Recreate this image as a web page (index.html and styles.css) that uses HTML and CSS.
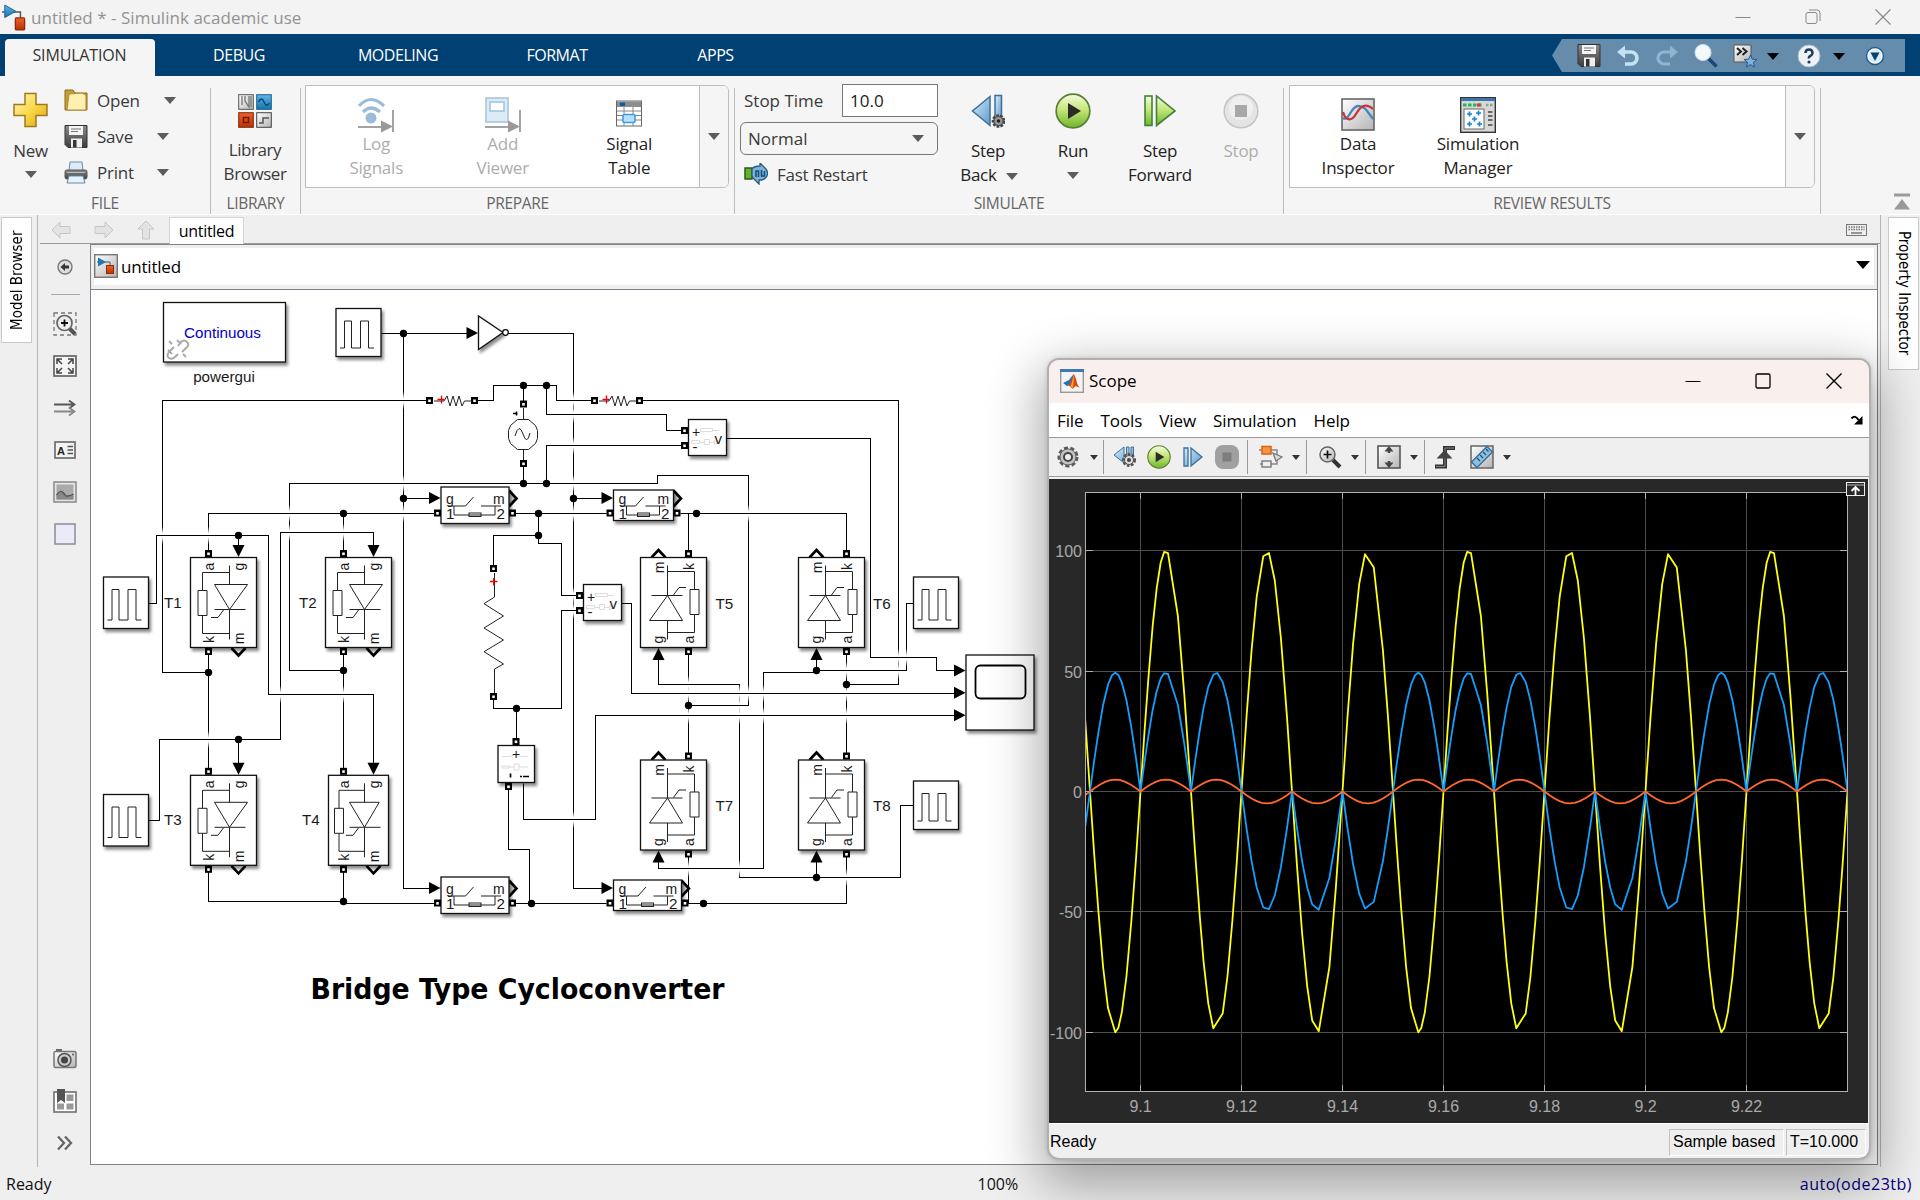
FILE: index.html
```html
<!DOCTYPE html>
<html lang="en">
<head>
<meta charset="utf-8">
<title>untitled * - Simulink academic use</title>
<link rel="stylesheet" href="styles.css">
</head>
<body>
<svg class="defs" aria-hidden="true">
  <defs>
    <linearGradient id="gold" x1="0" y1="0" x2="1" y2="1"><stop offset="0" stop-color="#fff6c0"/><stop offset=".5" stop-color="#fbd94b"/><stop offset="1" stop-color="#d9a514"/></linearGradient>
    <linearGradient id="blue" x1="0" y1="0" x2="1" y2="1"><stop offset="0" stop-color="#d8ecfa"/><stop offset="1" stop-color="#5a9bcc"/></linearGradient>
    <linearGradient id="deepblue" x1="0" y1="0" x2="0" y2="1"><stop offset="0" stop-color="#5fb8ea"/><stop offset="1" stop-color="#1672b0"/></linearGradient>
    <linearGradient id="red" x1="0" y1="0" x2="0" y2="1"><stop offset="0" stop-color="#f0602c"/><stop offset="1" stop-color="#b83206"/></linearGradient>
    <linearGradient id="green" x1="0" y1="0" x2="0" y2="1"><stop offset="0" stop-color="#f4fbe0"/><stop offset=".45" stop-color="#c5e87a"/><stop offset="1" stop-color="#6db52c"/></linearGradient>
    <linearGradient id="steel" x1="0" y1="0" x2="1" y2="1"><stop offset="0" stop-color="#ffffff"/><stop offset="1" stop-color="#b4b4b4"/></linearGradient>
    <linearGradient id="dark" x1="0" y1="0" x2="0" y2="1"><stop offset="0" stop-color="#8c8c8c"/><stop offset="1" stop-color="#3c3c3c"/></linearGradient>
    <symbol id="i-simulink" viewBox="0 0 26 30"><path d="M0 9h17M16 9h4v7" fill="none" stroke="#555" stroke-width="1.6"/><path d="M3 1.5v13.500l12-6.700z" fill="url(#deepblue)" stroke="#1c5a8a"/><rect x="14.500" y="15.500" width="10" height="13" rx="1" fill="url(#red)" stroke="#8c2c08" stroke-width="1.400"/></symbol>
    <symbol id="i-save" viewBox="0 0 24 24"><path d="M1 1h22v22H4l-3-3z" fill="url(#dark)" stroke="#333"/><rect x="5" y="1.500" width="14" height="9" fill="#f4f4f4"/><path d="M7 4.500h10M7 7h7" stroke="#777"/><rect x="7" y="14" width="11" height="9" fill="#eee"/><rect x="9" y="15.500" width="3.500" height="7.500" fill="#333"/></symbol>
    <symbol id="i-stepback" viewBox="0 0 34 36"><path d="M19 3.500v29L1.500 18z" fill="url(#blue)" stroke="#3f6f96" stroke-width="1.500"/><rect x="24" y="2.500" width="6.500" height="26" fill="url(#blue)" stroke="#3f6f96" stroke-width="1.500"/><circle cx="27.500" cy="28" r="5.600" fill="#aaa" stroke="#444" stroke-width="2.500" stroke-dasharray="2.700 1.200"/><circle cx="27.500" cy="28" r="4.500" fill="#999" stroke="#444"/><circle cx="27.500" cy="28" r="1.800" fill="#222"/></symbol>
    <symbol id="i-run" viewBox="0 0 36 36"><circle cx="18" cy="18" r="16.800" fill="url(#green)" stroke="#5b7f36" stroke-width="1.700"/><path d="M13 10l13 8-13 8z" fill="#2b2b2b"/></symbol>
    <symbol id="i-gear" viewBox="0 0 24 24"><circle cx="12" cy="12" r="8.500" fill="#bbb" stroke="#5a5a5a" stroke-width="4" stroke-dasharray="3.800 2.200"/><circle cx="12" cy="12" r="8" fill="#c4c4c4" stroke="#666"/><circle cx="12" cy="12" r="4" fill="#eee" stroke="#444" stroke-width="2"/></symbol>
    <symbol id="i-zoom" viewBox="0 0 24 24"><path d="M15 15l7 7" stroke="#333" stroke-width="4"/><circle cx="9.500" cy="9.500" r="7.500" fill="url(#steel)" stroke="#666" stroke-width="1.500"/><path d="M5.500 9.500h8M9.500 5.500v8" stroke="#111" stroke-width="1.700"/></symbol>
  </defs>
</svg>

<div class="app">
  <header class="titlebar">
    <svg class="app-icon" width="24" height="29"><use href="#i-simulink"/></svg>
    <span class="title-text">untitled * - Simulink academic use</span>
    <div class="win-controls">
      <svg width="16" height="16"><path d="M.5 8.500h15" stroke="#888"/></svg>
      <svg width="16" height="16" fill="none" stroke="#888"><rect x="1" y="3.500" width="11" height="11" rx="2"/><path d="M4 1h8q3 0 3 3v8"/></svg>
      <svg width="16" height="16"><path d="M.5.5l15 15M15.500.5l-15 15" stroke="#888" stroke-width="1.200"/></svg>
    </div>
  </header>

  <nav class="tabs">
    <span class="tab active">SIMULATION</span><span class="tab t-debug">DEBUG</span><span class="tab t-model">MODELING</span><span class="tab t-format">FORMAT</span><span class="tab t-apps">APPS</span>
    <div class="quick">
      <svg width="24" height="25"><use href="#i-save"/></svg>
      <svg width="24" height="24" viewBox="0 0 24 24"><path d="M7 8h8a6 6 0 0 1 0 12h-6" fill="none" stroke="#c5e2f5" stroke-width="3.600"/><path d="M1 8l8-6.500v13z" fill="#c5e2f5"/></svg>
      <svg width="24" height="24" viewBox="0 0 24 24"><path d="M17 8H9a6 6 0 0 0 0 12h6" fill="none" stroke="#8fb5d0" stroke-width="3.200"/><path d="M23 8l-8-6.500v13z" fill="#8fb5d0"/></svg>
      <svg width="24" height="24" viewBox="0 0 24 24"><path d="M14 14l8.500 8.500" stroke="#174a78" stroke-width="3.600"/><ellipse cx="9" cy="8.500" rx="8" ry="8" fill="#f3f8fc" stroke="#cfe0ee"/></svg>
      <svg width="24" height="24" viewBox="0 0 24 24"><path d="M1 1h17v17H1z" fill="url(#steel)" stroke="#555"/><path d="M4 4l4 3.500L4 11M9.500 4l4 3.500-4 3.500" fill="none" stroke="#222" stroke-width="2"/><path d="M17.500 11l1.800 4.200 4.600.3-3.500 3 1.100 4.500-4-2.400-4 2.400 1.100-4.500-3.500-3 4.600-.3z" fill="#7fb2de" stroke="#245a8c"/></svg>
      <i class="caret black"></i>
      <svg width="24" height="24" viewBox="0 0 24 24"><circle cx="12" cy="12" r="11" fill="#eef2f6" stroke="#a9bccb"/><path d="M8.500 9q0-3.500 3.500-3.500T15.500 9q0 1.800-2 2.900T12 14.500" fill="none" stroke="#223c5a" stroke-width="2.500"/><circle cx="12" cy="18" r="1.600" fill="#223c5a"/></svg>
      <i class="caret black"></i>
      <svg class="last" width="20" height="20" viewBox="0 0 20 20"><circle cx="10" cy="10" r="8.500" fill="#fff" stroke="#1e5f92" stroke-width="1.500"/><circle cx="10" cy="10" r="6.600" fill="#d9ecf8"/><path d="M5.500 6.500h9L10 15z" fill="#0b406c"/></svg>
    </div>
  </nav>

  <section class="ribbon">
    <div class="group g-file">
      <div class="group-body">
        <div class="big new">
          <svg width="35" height="36" viewBox="0 0 35 36"><path d="M12 1.500h11v11h11v11H23v11H12v-11H1v-11h11z" fill="url(#gold)" stroke="#a07a1c" stroke-width="1.500"/></svg>
          <span>New</span><i class="caret"></i>
        </div>
        <div class="rows">
          <div class="row r-open"><svg width="24" height="22" viewBox="0 0 24 22"><path d="M1 1h8l2 3h12v17H1z" fill="#c89f32" stroke="#8b6b1b"/><path d="M5 5l13-1 4 2v15H3z" fill="#fdf0b0" stroke="#ab8a35"/></svg><span>Open</span><i class="caret"></i></div>
          <div class="row"><svg width="24" height="25"><use href="#i-save"/></svg><span>Save</span><i class="caret"></i></div>
          <div class="row"><svg width="24" height="23" viewBox="0 0 24 23"><path d="M6 1h12l1 9H5z" fill="#dcebf7" stroke="#6f8ca5"/><rect x="1" y="9" width="22" height="9" rx="2" fill="url(#dark)" stroke="#555"/><path d="M3 11.500h18" stroke="#bbb"/><path d="M5 15h14l2 7H3z" fill="#e3f2fb" stroke="#628bab"/></svg><span>Print</span><i class="caret"></i></div>
        </div>
      </div>
      <div class="group-label">FILE</div>
    </div>

    <div class="group g-lib">
      <div class="group-body">
        <div class="big library">
          <svg width="34" height="34" viewBox="0 0 34 34"><rect x=".7" y=".7" width="14.600" height="14.600" fill="url(#steel)" stroke="#555"/><path d="M4 2v9M7 2v5l4 6V2M13 2v11" fill="none" stroke="#777" stroke-width="1.300"/><rect x="18.700" y=".7" width="14.600" height="14.600" fill="url(#deepblue)" stroke="#1e5f8c"/><path d="M20.500 8q3-6 5.500 0t5.500 1" fill="none" stroke="#0b4470" stroke-width="1.400"/><rect x=".7" y="18.700" width="14.600" height="14.600" fill="url(#red)" stroke="#7b2a0c"/><rect x="5.500" y="23.500" width="5" height="5" fill="none" stroke="#6b1c00" stroke-width="1.500"/><rect x="18.700" y="18.700" width="14.600" height="14.600" fill="url(#steel)" stroke="#444"/><path d="M21 29h4v-5h6" fill="none" stroke="#555" stroke-width="1.500"/></svg>
          <span>Library<br>Browser</span>
        </div>
      </div>
      <div class="group-label">LIBRARY</div>
    </div>

    <div class="group g-prep">
      <div class="group-body">
        <div class="gallery">
          <div class="gallery-items">
            <div class="tool off"><svg width="36" height="36" viewBox="0 0 36 36"><path d="M1 9Q13-4 26 9M5 15q8-8 17 0" fill="none" stroke="#9bbcd8" stroke-width="3.200"/><circle cx="13" cy="21" r="5.500" fill="#9bbcd8"/><path d="M0 30h24M35 13v22" stroke="#a3a3a3" stroke-width="2"/><path d="M23 23.500v12l12-6z" fill="#9a9a9a"/></svg><span>Log<br>Signals</span></div>
            <div class="tool off"><svg width="36" height="36" viewBox="0 0 36 36"><rect x="1" y="1" width="22" height="24" fill="#dcecf7" stroke="#aac6da" stroke-width="1.600"/><rect x="5" y="5" width="14" height="9" fill="#fff" stroke="#9cc3df" stroke-width="1.500"/><path d="M0 30h24M35 13v22" stroke="#a3a3a3" stroke-width="2"/><path d="M23 23.500v12l12-6z" fill="#9a9a9a"/></svg><span>Add<br>Viewer</span></div>
            <div class="tool"><svg width="36" height="36" viewBox="0 0 36 36"><rect x="5.500" y="4" width="25" height="25" fill="#fff" stroke="#666"/><rect x="6" y="4.500" width="24" height="5.500" fill="#8d8d8d"/><rect x="9" y="5.500" width="5" height="3.500" fill="#135a9c"/><path d="M6 14h24M6 18.500h24M6 23h24M13 10v19M22 10v19" stroke="#888"/><rect x="12" y="17.500" width="12" height="8" rx="1.500" fill="#b9e0fc" stroke="#3f9be4" stroke-width="1.600"/></svg><span>Signal<br>Table</span></div>
          </div>
          <div class="gallery-drop"><i class="caret"></i></div>
        </div>
      </div>
      <div class="group-label">PREPARE</div>
    </div>

    <div class="group g-sim">
      <div class="group-body">
        <div class="settings">
          <div class="stop-time"><label>Stop Time</label><div class="field">10.0</div></div>
          <div class="combo"><span>Normal</span><i class="caret"></i></div>
          <div class="fast"><svg width="24" height="22" viewBox="0 0 24 22"><rect x="1" y="5" width="7" height="11" fill="#64b22d" stroke="#2d5d12" stroke-width="1.500"/><path d="M8 6q2-3 8-3V0l4 4q4 3 3.500 7T18 17h-3v4l-4-4q-4-3-3-7z" fill="#7db3d8" stroke="#295a80" stroke-width="1.300"/><path d="M12 14V8h2.500v6M17.500 7v6h3V8" fill="none" stroke="#174d7c" stroke-width="1.600"/></svg><span>Fast Restart</span></div>
        </div>
        <div class="big b-back"><svg width="34" height="36"><use href="#i-stepback"/></svg><span>Step<br>Back <i class="caret inline"></i></span></div>
        <div class="big b-run"><svg width="36" height="36"><use href="#i-run"/></svg><span>Run</span><i class="caret"></i></div>
        <div class="big b-fwd"><svg width="34" height="36" viewBox="0 0 34 36"><rect x="2" y="3" width="7" height="29.500" fill="url(#green)" stroke="#44803a" stroke-width="1.600"/><path d="M13.500 3v29.500L32 18z" fill="url(#green)" stroke="#44803a" stroke-width="1.600"/></svg><span>Step<br>Forward</span></div>
        <div class="big b-stop off"><svg width="36" height="36" viewBox="0 0 36 36"><circle cx="18" cy="18" r="16.800" fill="#e4e4e4" stroke="#c4c4c4" stroke-width="1.500"/><circle cx="18" cy="15" r="12" fill="#efefef"/><rect x="12" y="12" width="12" height="12" fill="#a8a8a8"/></svg><span>Stop</span></div>
      </div>
      <div class="group-label">SIMULATE</div>
    </div>

    <div class="group g-review">
      <div class="group-body">
        <div class="gallery">
          <div class="gallery-items">
            <div class="tool"><svg width="36" height="36" viewBox="0 0 36 36"><rect x="2" y="2" width="32" height="31" fill="url(#steel)" stroke="#666" stroke-width="1.600"/><path d="M3 21c6 4 8-12 15-12s9 5 15 13" fill="none" stroke="#3f86c4" stroke-width="2.300"/><path d="M3 15c3 10 9 9 13 2s9-12 17-5" fill="none" stroke="#c33" stroke-width="2.300"/></svg><span>Data<br>Inspector</span></div>
            <div class="tool"><svg width="36" height="36" viewBox="0 0 36 36"><rect x=".7" y=".7" width="34.600" height="34.600" fill="#d8d8d8" stroke="#333" stroke-width="1.400"/><path d="M1 2.500h34" stroke="#3d76ad" stroke-width="3"/><path d="M3 8h20" stroke="#1fb85a" stroke-width="3" stroke-dasharray="3.500 1.500"/><path d="M17 8h3.500" stroke="#e33" stroke-width="3"/><path d="M26 8h8" stroke="#999" stroke-width="2.500" stroke-dasharray="2.500 1.500"/><rect x="4" y="12" width="20" height="20" fill="#fff" stroke="#666"/><path d="M7 17h5M9.500 14.500v5M16 16h5M18.500 13.500v5M12 22h5M14.500 19.500v5M7 27h5M9.500 24.500v5M17 27h5M19.500 24.500v5" stroke="#1687d0" stroke-width="1.700"/><path d="M28 15h4.500M28 19h4.500M28 23h4.500M28 28h4.500" stroke="#444" stroke-width="1.600"/></svg><span>Simulation<br>Manager</span></div>
          </div>
          <div class="gallery-drop"><i class="caret"></i></div>
        </div>
      </div>
      <div class="group-label">REVIEW RESULTS</div>
    </div>
    <div class="collapse"><svg width="16" height="17"><path d="M0 2h16" stroke="#9a9a9a" stroke-width="3"/><path d="M8 6l8 10.500H0z" fill="#9a9a9a"/></svg></div>
  </section>

  <main class="work">
    <aside class="dock dock-left"><div class="dock-tab"><span>Model Browser</span></div></aside>
    <div class="center">
      <div class="doc-bar">
        <svg class="nav-ico" width="20" height="18"><path d="M1 9l8-8v4.500h10v7H9V17z" fill="#e3e3e3" stroke="#c6c6c6"/></svg>
        <svg class="nav-ico" width="20" height="18"><path d="M19 9l-8-8v4.500H1v7h10V17z" fill="#e3e3e3" stroke="#c6c6c6"/></svg>
        <svg class="nav-ico" width="18" height="20"><path d="M9 1l8 8h-4.500v10h-7V9H1z" fill="#e3e3e3" stroke="#c6c6c6"/></svg>
        <div class="doc-tab">untitled</div>
        <svg class="keyboard" width="21" height="12"><rect x=".5" y=".5" width="20" height="11" fill="#eee" stroke="#777"/><path d="M2.500 3h16M2.500 5.500h16" stroke="#777" stroke-width="1.300" stroke-dasharray="1.500 1"/><path d="M5 9h11" stroke="#777" stroke-width="1.500"/></svg>
      </div>
      <div class="editor">
        <div class="palette">
          <div class="pal-head"><svg width="16" height="16"><circle cx="8" cy="8" r="7" fill="#ddd" stroke="#777" stroke-width="1.400"/><path d="M3.500 8l4.500-4v2.500h4v3H8V12z" fill="#333"/></svg></div>
          <hr>
          <div class="pal"><svg width="24" height="24"><rect x="1" y="1" width="22" height="22" fill="none" stroke="#777" stroke-width="1.300" stroke-dasharray="4 3"/><path d="M16 16l6 6" stroke="#555" stroke-width="4"/><circle cx="11.500" cy="11" r="7.500" fill="#eee" stroke="#666" stroke-width="1.700"/><path d="M8 11h7M11.500 7.500v7" stroke="#111" stroke-width="1.800"/></svg></div>
          <div class="pal"><svg width="24" height="22"><rect x="1" y="1" width="22" height="20" fill="#f5f5f5" stroke="#666" stroke-width="1.700"/><path d="M4 9V4h5M15 4h5v5M20 13v5h-5M9 18H4v-5M4 4l5 5M20 4l-5 5M20 18l-5-5M4 18l5-5" fill="none" stroke="#444" stroke-width="1.500"/></svg></div>
          <div class="pal"><svg width="22" height="16" fill="none" stroke="#666" stroke-width="1.800"><path d="M0 4.500h20M15 .5l5.500 4-5.500 4" stroke="#555"/><path d="M0 11.500h20M15 7.500l5.500 4-5.500 4" stroke="#888"/></svg></div>
          <div class="pal"><svg width="22" height="18"><rect x="1" y="1" width="20" height="16" fill="#f3f3f3" stroke="#666" stroke-width="1.600"/><text x="3" y="13.500" class="pal-a">A</text><path d="M13.500 5.500H19M13.500 9H19M13.500 12.500H19" stroke="#555" stroke-width="1.300"/></svg></div>
          <div class="pal"><svg width="24" height="22"><rect x="1" y="1" width="22" height="20" fill="#e5e5e5" stroke="#888" stroke-width="1.500"/><rect x="3.500" y="3.500" width="17" height="15" fill="#aaa"/><path d="M3.500 14q4-6 7-2t4 3q3-1 6-2v5.500h-17z" fill="#888"/><path d="M3.500 14q4-6 7-2t4 3q3 0 6-2" fill="none" stroke="#555" stroke-width="1.300"/></svg></div>
          <div class="pal"><svg width="22" height="22"><rect x="1" y="1" width="20" height="20" fill="#eaeaf8" stroke="#8c8c94" stroke-width="1.500"/></svg></div>
          <div class="pal-foot">
            <div class="pal"><svg width="24" height="20"><path d="M3 0h6v3H3z" fill="#666"/><rect x="1" y="2.500" width="22" height="16" rx="1.500" fill="url(#steel)" stroke="#777" stroke-width="1.500"/><circle cx="11.500" cy="11" r="6.500" fill="#ccc" stroke="#555" stroke-width="1.500"/><circle cx="11.500" cy="11" r="3.500" fill="#444"/><circle cx="20" cy="5.500" r="1" fill="#555"/></svg></div>
            <div class="pal"><svg width="24" height="24"><rect x="1" y="3" width="22" height="20" fill="#fff" stroke="#777" stroke-width="1.700"/><rect x="13.500" y="5.500" width="7" height="6.500" fill="#999"/><rect x="13.500" y="14.500" width="7" height="6" fill="#999"/><rect x="4" y="14.500" width="7" height="6" fill="#999"/><path d="M4 0h8v14l-4-3-4 3z" fill="#555"/></svg></div>
            <div class="pal"><svg width="16" height="16" fill="none" stroke="#666" stroke-width="2.300"><path d="M1 1.500L7 8l-6 6.500M8 1.500L14 8l-6 6.500"/></svg></div>
          </div>
        </div>
        <div class="sheet">
          <div class="crumb">
            <svg width="24" height="24"><rect x=".7" y=".7" width="22.600" height="22.600" fill="url(#steel)" stroke="#777" stroke-width="1.400"/><path d="M3 8h13v4" fill="none" stroke="#555"/><path d="M4 3.500v9l8-4.500z" fill="#2277b4"/><rect x="12.500" y="11.500" width="7" height="8" fill="url(#red)" stroke="#8c2c08"/></svg>
            <span>untitled</span><i class="caret black"></i>
          </div>
          <svg class="canvas" id="canvas" viewBox="91 290 1786 874" width="1786" height="874"></svg>
        </div>
      </div>
    </div>
    <aside class="dock dock-right"><div class="dock-tab"><span>Property Inspector</span></div></aside>
  </main>

  <footer class="statusbar"><span>Ready</span><span class="zoom-level">100%</span><span class="solver">auto(ode23tb)</span></footer>
</div>

<section class="scope">
  <div class="scope-title">
    <svg width="24" height="24"><rect x=".7" y=".7" width="22.600" height="22.600" fill="#f4f4f4" stroke="#999" stroke-width="1.400"/><path d="M0 1.500h24" stroke="#3d7ab5" stroke-width="3"/><path d="M3 14l6-3 3-4 2-2-3 11-4 1z" fill="#2b6fb0"/><path d="M13.500 5q1.500 1 3 7t4 7l-5-2-3 3-4-4q2-1 5-11z" fill="#d9481c"/><path d="M13.500 5q1 6-1 15l-2-3q2-4 3-12z" fill="#f7a81c"/></svg>
    <span>Scope</span>
    <div class="scope-controls">
      <svg width="16" height="16"><path d="M.5 8.500h15" stroke="#000" stroke-width="1.200"/></svg>
      <svg width="16" height="16"><rect x="1" y="1" width="14" height="14" rx="1.500" fill="none" stroke="#000" stroke-width="1.300"/></svg>
      <svg width="16" height="16"><path d="M.5.5l15 15M15.500.5l-15 15" stroke="#000" stroke-width="1.400"/></svg>
    </div>
  </div>
  <div class="scope-menu"><span>File</span><span>Tools</span><span>View</span><span>Simulation</span><span>Help</span>
    <svg width="12" height="10"><path d="M.5 3.500Q4-.5 7.500 5" fill="none" stroke="#000" stroke-width="2"/><path d="M11.500 1v8.500H3z" fill="#000"/></svg></div>
  <div class="scope-tools">
    <div class="tg tg1"><b><svg width="24" height="24"><use href="#i-gear"/></svg></b><i class="caret small"></i></div>
    <div class="tg tg2">
      <b><svg width="24" height="24" viewBox="0 0 24 24"><path d="M11 2v16L1 10zM13.500 2h2.500v12h-2.500zM18 2h2.500v12H18z" fill="url(#blue)" stroke="#3f6f96"/><circle cx="16" cy="15" r="5.500" fill="#ccc" stroke="#555" stroke-width="3" stroke-dasharray="2.500 1.500"/><circle cx="16" cy="15" r="4.500" fill="#ddd" stroke="#555"/><circle cx="16" cy="15" r="2" fill="#444"/></svg></b>
      <b><svg width="24" height="24"><use href="#i-run"/></svg></b>
      <b><svg width="20" height="20" viewBox="0 0 20 20"><path d="M1 1h4v18H1zM8 1v18l11-9z" fill="url(#blue)" stroke="#3a6f9c" stroke-width="1.300"/></svg></b>
      <b><svg width="24" height="24"><rect width="24" height="24" rx="8" fill="#a0a0a0"/><rect x="7.500" y="7.500" width="9" height="9" fill="#7d7d7d"/></svg></b></div>
    <div class="tg tg3"><b><svg width="24" height="24"><path d="M0 5h18v5M1 19h17v-5" fill="none" stroke="#888" stroke-width="1.500"/><rect x="3" y="1.500" width="9" height="7.500" fill="#f5933e" stroke="#d9691a" stroke-width="1.600"/><rect x="3" y="16" width="9" height="6" fill="#eee" stroke="#777" stroke-width="1.400"/><path d="M14 8l9 4-6 4z" fill="#ddd" stroke="#777" stroke-width="1.300"/></svg></b><i class="caret small"></i></div>
    <div class="tg tg3"><b><svg width="24" height="24"><use href="#i-zoom"/></svg></b><i class="caret small"></i></div>
    <div class="tg tg3"><b><svg width="24" height="24"><rect x="1" y="1" width="22" height="22" fill="url(#steel)" stroke="#555" stroke-width="1.600"/><path d="M12 1l4.500 5.500h-9zM12 23l4.500-5.500h-9z" fill="#444"/><path d="M12 4v4M12 16v4" stroke="#444" stroke-width="2.500"/></svg></b><i class="caret small"></i></div>
    <div class="tg tg6"><b class="w40"><svg width="22" height="24"><path d="M1 21.500h10V3h10" fill="none" stroke="#333" stroke-width="4"/><path d="M2 21.500h9V3h9" fill="none" stroke="#888" stroke-width="1"/><path d="M10.500 5l8 8.500H2.500z" fill="#444"/></svg></b>
      <b><svg width="24" height="24"><rect x="1" y="1" width="22" height="22" fill="url(#steel)" stroke="#666" stroke-width="1.500"/><path d="M17 1.500l5.500 5.500L7 22.500l-5.500-5.500z" fill="#8cc0e2" stroke="#376d94" stroke-width="1.300"/><path d="M7 13l3 3M10 10l3 3M13 7l3 3M16 4l2.500 2.500" stroke="#1f4f75" stroke-width="1.200"/></svg></b><i class="caret small"></i></div>
  </div>
  <svg class="plot" id="plot" viewBox="1049 479 819 644" width="819" height="644"></svg>
  <div class="scope-status"><span>Ready</span><span class="cell c1">Sample based</span><span class="cell c2">T=10.000</span></div>
</section>
<script src="app.js"></script>
</body>
</html>
```
FILE: styles.css
```css
* { box-sizing: border-box; }
body { margin: 0; width: 1920px; height: 1200px; overflow: hidden; position: relative; background: #efefef; font-family: "Open Sans", "Noto Sans", sans-serif; font-size: 17px; color: #3a3a3a; }
svg { display: block; flex: none; }
.defs { width: 0; height: 0; }
.app { display: flex; flex-direction: column; height: 1200px; }

.caret { display: inline-block; flex: none; width: 0; height: 0; border: 6px solid transparent; border-top: 7px solid #5c5c5c; border-bottom: 0; }
.caret.black { border-top-color: #000; }
.caret.small { border-width: 5px 4px 0; border-top-color: #333; }
.caret.inline { vertical-align: 1px; margin-left: 5px; margin-right: -2px; }

.titlebar { height: 34px; flex: none; display: flex; align-items: center; background: #f3f3f3; padding-left: 2px; color: #929292; }
.title-text { margin-left: 5px; font-size: 17px; letter-spacing: 0.03px; white-space: nowrap; }
.win-controls { margin-left: auto; display: flex; gap: 54px; padding-right: 29px; }

.tabs { height: 42px; flex: none; display: flex; align-items: stretch; background: #004073; padding: 5px 15px 0 5px; color: #fff; font-size: 16px; letter-spacing: -0.45px; }
.tab { display: flex; align-items: center; justify-content: center; height: 31px; width: 150px; }
.tab.active { background: #f5f5f5; color: #333; height: 37px; padding: 0 1px 6px 0; border-radius: 4px 4px 0 0; letter-spacing: -0.15px; }
.t-debug { width: 168px; }
.t-model { width: 150px; }
.t-format { width: 168px; }
.t-apps { width: 149px; }
.quick { margin-left: auto; width: 353px; height: 33px; display: flex; align-items: center; background: #668cab; clip-path: polygon(10px 0, 100% 0, 100% 100%, 10px 100%, 0 50%); padding-left: 25px; gap: 15px; }
.quick svg:nth-of-type(5) { margin-right: -5px; }
.quick svg:nth-of-type(6) { margin-right: -3px; }
.quick .caret { margin-right: 3px; margin-top: 1px; }
.quick .last { margin-left: 2px; }

.ribbon { height: 139px; flex: none; display: flex; background: #f5f5f5; border-bottom: 1px solid #fff; }
.group { display: flex; flex-direction: column; background: linear-gradient(#bdbdbd, #bdbdbd) right 0 top 12px / 1px 126px no-repeat; }
.group-body { height: 112px; display: flex; }
.group-label { height: 26px; padding: 1px 1px 0 0; line-height: 28px; text-align: center; font-size: 15.500px; letter-spacing: -0.3px; color: #666; }
.g-file { width: 211px; }
.g-lib { width: 90px; }
.g-prep { width: 434px; }
.g-sim { width: 549px; }
.g-review { width: 537px; }
.big { display: flex; flex-direction: column; align-items: center; text-align: center; line-height: 24px; padding-top: 17px; font-size: 17px; letter-spacing: -0.3px; white-space: nowrap; }
.big span { margin-top: 9px; }
.big > .caret { margin-top: 9px; }
.new { width: 62px; padding-right: 1px; padding-top: 16px; }
.new span { margin-top: 11px; }
.new > .caret { margin-top: 8px; }
.library { width: 88px; padding-top: 18px; letter-spacing: -0.45px; }
.library span { margin-top: 10px; }
.rows { padding-top: 6px; }
.row { height: 36px; display: flex; align-items: center; padding-left: 2px; letter-spacing: -0.2px; }
.row span { width: 59px; margin-left: 9px; }
.r-open span { width: 66px; }
.row .caret { margin-left: 1px; }
.gallery { display: flex; margin: 9px 0 0 4px; height: 103px; border: 1px solid #bdbdbd; border-radius: 0 6px 6px 0; background: #fff; overflow: hidden; }
.g-prep .gallery { width: 424px; }
.g-review .gallery { width: 526px; margin-left: 5px; }
.gallery-items { flex: 1; display: flex; padding-left: 7px; }
.gallery-drop { width: 29px; background: #f5f5f5; border-left: 1px solid #bdbdbd; display: flex; align-items: center; justify-content: center; }
.tool { width: 126.500px; display: flex; flex-direction: column; align-items: center; text-align: center; padding-top: 11px; line-height: 24px; letter-spacing: -0.2px; color: #222; }
.tool span { margin-top: -1px; }
.g-review .tool { width: 120px; }
.g-review .gallery-items { padding-left: 8px; }
.off, .tool.off { color: #adadad; }
.settings { width: 203px; padding: 8px 0 0 5px; }
.stop-time { display: flex; align-items: center; padding-left: 4px; }
.stop-time label { width: 98px; }
.field { width: 96px; height: 33px; border: 1px solid #777; background: #fff; padding-left: 7px; line-height: 31px; color: #222; }
.combo { width: 198px; height: 33px; margin-top: 5px; border: 1px solid #777; border-radius: 6px; display: flex; align-items: center; justify-content: space-between; padding: 0 13px 0 7px; }
.fast { display: flex; align-items: center; gap: 9px; padding-left: 4px; height: 32px; margin-top: 3px; letter-spacing: -0.25px; }
.g-sim .big { width: 86px; padding-top: 17px; color: #222; }
.g-sim .big span { margin-top: 10px; }
.g-sim .big.off { color: #adadad; }
.g-sim .b-back { margin-left: 7px; }
.g-sim .b-run { width: 84px; }
.g-sim .b-fwd { margin-left: 2px; }
.g-sim .b-stop { width: 76px; }
.collapse { flex: 1; display: flex; align-items: flex-end; justify-content: flex-end; padding: 0 10px 4px 0; }

.work { flex: 1; display: flex; min-height: 0; }
.dock { padding-top: 2px; }
.dock-left { width: 38px; border-right: 1px solid #b4b4b4; padding-left: 1px; height: 952px; }
.dock-right { width: 40px; border-left: 1px solid #b4b4b4; padding-left: 7px; height: 952px; }
.dock-tab { width: 31px; height: 126px; background: #fff; border: 1px solid #c8c8c8; writing-mode: vertical-rl; display: flex; align-items: center; justify-content: center; color: #000; font: 15px "DejaVu Sans Condensed", "DejaVu Sans", sans-serif; font-stretch: condensed; white-space: nowrap; }
.dock-left .dock-tab { transform: rotate(180deg); }
.dock-right .dock-tab { height: 153px; }
.center { flex: 1; display: flex; flex-direction: column; height: 952px; }
.doc-bar { height: 29px; flex: none; margin-left: 2px; border-bottom: 1px solid #999; display: flex; align-items: center; padding-left: 11px; }
.nav-ico { margin-right: 23px; margin-top: 2px; }
.nav-ico + .nav-ico + .nav-ico { margin-right: 14px; }
.doc-tab { align-self: flex-end; width: 75px; height: 27px; margin-bottom: -1px; background: #fff; border: 1px solid #d4d4d4; border-bottom: 0; text-align: center; line-height: 27px; color: #000; font-size: 16px; letter-spacing: -0.3px; }
.keyboard { margin-left: auto; margin-right: 13px; margin-top: 2px; }
.editor { display: flex; height: 921px; }
.palette { width: 52px; padding-left: 2px; display: flex; flex-direction: column; align-items: center; }
.pal-head { height: 50px; padding-top: 15px; }
.palette hr { width: 29px; margin: 0 0 8px; border: 0; border-top: 1px solid #aaa; }
.pal { height: 42px; width: 50px; display: flex; align-items: center; justify-content: center; }
.pal-foot { margin-top: auto; margin-bottom: 1px; }
.pal-a { font: bold 11px "Liberation Sans", sans-serif; fill: #222; }
.sheet { width: 1788px; border: 1px solid #7e828c; background: #fff; }
.crumb { height: 44px; border: solid #efefef; border-width: 3px 3px 0 3px; box-shadow: inset 0 -4px #efefef; display: flex; align-items: center; padding-bottom: 4px; color: #000; font-size: 17px; letter-spacing: -0.2px; }
.crumb svg { margin-top: -1px; }
.crumb span { margin-left: 3px; }
.crumb .caret { margin-left: auto; margin-right: 4px; border-width: 8px 7px 0; margin-bottom: 3px; }
.canvas { border-top: 1px solid #7e828c; box-sizing: content-box; }
.statusbar { height: 33px; flex: none; display: flex; align-items: center; padding: 0 8px 0 6px; color: #111; font-size: 16px; }
.zoom-level { margin-left: 926px; }
.statusbar .solver { margin-left: auto; color: #00007f; letter-spacing: 0.5px; }

.scope { position: absolute; left: 1047px; top: 358px; width: 824px; height: 802px; border: 2px solid #b0b0b0; border-radius: 12px; overflow: hidden; background: #efefef; box-shadow: 0 0 4px rgba(0,0,0,.15), 0 18px 52px 8px rgba(0,0,0,.33); color: #000; font-size: 17px; }
.scope-title { height: 43px; background: #f9f0ed; display: flex; align-items: center; padding: 0 0 2px 11px; font-size: 17px; }
.scope-title span { margin-left: 5px; }
.scope-controls { display: flex; gap: 54px; margin-left: auto; padding-right: 27px; }
.scope-controls svg:last-child { margin-left: 1px; }
.scope-menu { height: 35px; background: #fff; border-bottom: 1px solid #999; display: flex; align-items: center; gap: 17px; padding-left: 8px; letter-spacing: -0.1px; }
.scope-menu svg { margin-left: auto; margin-right: 6px; }
.scope-tools { height: 39px; display: flex; border-bottom: 1px solid #999; padding: 2px 0; }
.tg { display: flex; align-items: center; border-right: 1px solid #999; }
.tg b { width: 34px; display: flex; justify-content: center; }
.tg1 { width: 55px; }
.tg1 b { width: 38px; }
.tg1 .caret { margin-left: 3px; }
.tg2 { width: 144px; padding-left: 4px; }
.tg3 { width: 59px; padding-left: 6px; }
.tg3 .caret { margin-left: 4px; }
.tg6 { border: 0; }
.tg6 .w40 { width: 40px; }
.tg6 .caret { margin-left: 4px; }
.plot { margin-top: 2px; background: #282828; }
.scope-status { height: 35px; display: flex; align-items: center; font: 16px "Liberation Sans", Arial, sans-serif; padding: 2px 0 0 1px; border-top: 1px solid #fff; }
.cell { height: 27px; line-height: 24px; border: 1px solid #c2c2c2; border-right-color: #fff; border-bottom-color: #fff; padding-left: 3px; white-space: nowrap; }
.c1 { margin-left: auto; width: 115px; }
.c2 { width: 80px; margin: 0 3px 0 2px; }

.w { fill: none; stroke: #000; stroke-width: 1; }
.blk { fill: #fff; stroke: #111; stroke-width: 1.300; filter: drop-shadow(2px 3px 1.500px rgba(0,0,0,.45)); }
.in { fill: none; stroke: #222; stroke-width: 1; }
.faint { fill: none; stroke: #ddd; stroke-width: 1; }
.chev { fill: none; stroke: #000; stroke-width: 2.600; }
.shade { fill: #ccc; }
.lbl { font: 15.200px "Liberation Sans", Arial, sans-serif; fill: #1a1a1a; }
.lbl.sm { font-size: 14px; }
.lbl.mid { text-anchor: middle; }
.lbl.cont { fill: #0000c8; }
.heading { font: bold 28px "DejaVu Sans Condensed", "DejaVu Sans", sans-serif; font-stretch: condensed; fill: #000; }
.axis { font: 16px "Liberation Sans", Arial, sans-serif; fill: #a8a8a8; }
```
FILE: app.js
```js
// ---------- block diagram ----------
const wires = [
  [382,333.5, 467,333.5], [508,333.5, 573.5,333.5, 573.5,888.5, 602,888.5],
  [403.5,333.5, 403.5,888.5, 430,888.5], [403.5,498.5, 430,498.5], [573.5,498.5, 602,498.5],
  [426,400.5, 162.5,400.5, 162.5,672.5, 208.5,672.5],
  [478,400.5, 493.5,400.5, 493.5,385.5, 556.5,385.5, 556.5,400.5, 591,400.5],
  [643,400.5, 898.5,400.5, 898.5,684.5, 846.5,684.5],
  [523.5,385.5, 523.5,401], [523.5,467, 523.5,483.5],
  [546.5,385.5, 546.5,414.5, 666.5,414.5, 666.5,430.5, 681,430.5],
  [546.5,483.5, 546.5,445.5, 681,445.5],
  [343.5,670.5, 289.5,670.5, 289.5,483.5, 657.5,483.5, 657.5,475.5, 748.5,475.5, 748.5,705.5, 688.5,705.5],
  [727,438.5, 870.5,438.5, 870.5,657.5, 936.5,657.5, 936.5,670.5, 955,670.5],
  [434,513.5, 208.5,513.5, 208.5,550], [343.5,513.5, 343.5,550],
  [516,513.5, 606,513.5], [538.5,513.5, 538.5,543.5, 561.5,543.5, 561.5,595.5, 576,595.5],
  [538.5,535.5, 493.5,535.5, 493.5,565],
  [681,513.5, 846.5,513.5, 846.5,550], [688.5,513.5, 688.5,550],
  [493.5,700, 493.5,708.5, 561.5,708.5, 561.5,610.5, 576,610.5], [516.5,708.5, 516.5,738],
  [622,603.5, 631.5,603.5, 631.5,693.5, 955,693.5],
  [523.5,784, 523.5,819.5, 595.5,819.5, 595.5,715.5, 955,715.5],
  [508.5,790, 508.5,849.5, 529.5,849.5, 529.5,903.5], [516,903.5, 606,903.5],
  [149,603.5, 156.5,603.5, 156.5,535.5, 268.5,535.5, 268.5,694.5, 373.5,694.5, 373.5,764],
  [238.5,535.5, 238.5,546],
  [149,820.5, 159.5,820.5, 159.5,739.5, 280.5,739.5, 280.5,532.5, 373.5,532.5, 373.5,546],
  [238.5,739.5, 238.5,764],
  [208.5,655, 208.5,768], [343.5,655, 343.5,768],
  [208.5,872, 208.5,901.5, 343.5,901.5], [343.5,872, 343.5,903.5, 434,903.5],
  [688.5,655, 688.5,753], [846.5,655, 846.5,753],
  [688.5,857, 688.5,903.5], [688,903.5, 846.5,903.5, 846.5,857],
  [658.5,660, 658.5,684.5, 739.5,684.5, 739.5,877.5, 900.5,877.5, 900.5,805.5, 913,805.5],
  [816.5,877.5, 816.5,862], [816.5,660, 816.5,672.5, 763.5,672.5, 763.5,868.5, 658.5,868.5, 658.5,862],
  [816.5,670.5, 906.5,670.5, 906.5,603.5, 913,603.5]
];
const dots = [[403.5,333.5],[523.5,385.5],[546.5,385.5],[523.5,483.5],[546.5,483.5],[403.5,498.5],[573.5,498.5],
  [343.5,513.5],[538.5,513.5],[538.5,535.5],[696.5,513.5],[238.5,535.5],[208.5,672.5],[343.5,670.5],[238.5,739.5],
  [343.5,901.5],[531.5,903.5],[703.5,903.5],[516.5,708.5],[688.5,705.5],[816.5,670.5],[846.5,684.5],[816.5,877.5]];

let out = '';
const add = s => { out += s; };
const path = (d, c) => `<path class="${c}" d="${d}"/>`;
const rect = (x, y, w, h, c, extra = '') => `<rect class="${c}" x="${x}" y="${y}" width="${w}" height="${h}" ${extra}/>`;
const text = (x, y, t, c = 'lbl', extra = '') => `<text class="${c}" x="${x}" y="${y}" ${extra}>${t}</text>`;

add(`<defs><linearGradient id="fade" x1="0" y1="0" x2="0" y2="1"><stop offset="0" stop-color="#fff" stop-opacity="0"/><stop offset=".4" stop-color="#fff"/><stop offset=".6" stop-color="#fff"/><stop offset="1" stop-color="#fff" stop-opacity="0"/></linearGradient></defs>`);

const horiz = [], vert = [];
for (const w of wires)
  for (let i = 0; i + 3 < w.length; i += 2) {
    const [x1, y1, x2, y2] = w.slice(i, i + 4);
    if (y1 === y2) horiz.push([Math.min(x1, x2), Math.max(x1, x2), y1]);
    else vert.push([x1, Math.min(y1, y2), Math.max(y1, y2)]);
  }
for (const [x, a, b] of vert) add(path(`M${x} ${a - .5}V${b + .5}`, 'w'));
// vertical wires fade out where they pass under a horizontal one
for (const [x, a, b] of vert)
  for (const [l, r, y] of horiz)
    if (x > l + 1 && x < r - 1 && y > a + 1 && y < b - 1 && !dots.some(d => Math.abs(d[0] - x) < 3 && Math.abs(d[1] - y) < 3))
      add(`<rect x="${x - 1}" y="${y - 9}" width="2" height="18" fill="url(#fade)"/>`);
for (const [l, r, y] of horiz) add(path(`M${l - .5} ${y}H${r + .5}`, 'w'));
for (const [x, y] of dots) add(`<circle cx="${x}" cy="${y}" r="3.700"/>`);

const port = (x, y) => add(`<rect x="${x - 3.5}" y="${y - 3.5}" width="7" height="7"/><rect x="${x - 1.3}" y="${y - 1}" width="2.600" height="2.600" fill="#fff"/>`);
const arrow = (x, y, dir) => {
  const p = { r: `M${x} ${y}l-11.500-6v12z`, d: `M${x} ${y}l-6-12h12z`, u: `M${x} ${y}l-6 12h12z` }[dir];
  add(`<path d="${p}"/>`);
};
const pulse = (x, y, h) => {
  const lo = y + h - 8.5, hi = y + 12.5;
  add(rect(x, y, 45, h, 'blk') + path(`M${x + 4} ${lo}h4.500V${hi}h7V${lo}h9V${hi}h8V${lo}h5.500`, 'in'));
};
const thyristor = (x, y, up, narrow) => {
  const inset = narrow ? 3 : 0, k = narrow ? .9 : 1, cx = x + 39;
  add(path(up ? `M${x + 11} ${y}l7-7.500 7 7.500` : `M${x + 41} ${y + 90.5}l7 7.500 7-7.500`, 'chev'));
  add(rect(x + inset, y, 66 - 2 * inset, 90, 'blk'));
  add(`<g transform="${up ? `rotate(180 ${x + 33} ${y + 45})` : ''}">` + path(
    `M${cx} ${y + 8}v19M${cx - 15} ${y + 27}h${33 * k}L${cx} ${y + 52}zM${cx - 15} ${y + 52}h31M${cx} ${y + 52}v30` +
    `M${x + 20.5} ${y + 60}h7l5.500-7.500M${cx} ${y + 15}H${x + 12 + inset / 2}v18m-4.500 0h9v25h-9zm4.500 25v18H${cx}`, 'in') + '</g>');
  const rot = (tx, ty, t) => add(`<text class="lbl sm mid" transform="translate(${tx} ${ty}) rotate(-90)">${t}</text>`);
  if (up) { rot(x + 23, y + 10, 'm'); rot(x + 53, y + 9, 'k'); rot(x + 22.5, y + 82, 'g'); rot(x + 53, y + 82, 'a'); }
  else { rot(x + 23, y + 9, 'a'); rot(x + 53, y + 9, 'g'); rot(x + 23, y + 82, 'k'); rot(x + 53, y + 81, 'm'); }
  port(up ? x + 48 : x + 18, y - 4); port(up ? x + 48 : x + 18, y + 94);
  up ? arrow(x + 18, y + 90.5, 'u') : arrow(x + 48, y - .5, 'd');
};
const sw = (x, y, w, h, py) => {
  const cy = py - 15;
  add(path(`M${x + w} ${cy - 7.5}l7.500 8-7.500 8`, 'chev shade') + rect(x, y, w, h, 'blk'));
  const s = (w - 60) / 16, b = cy + 8;
  add(text(x + 5, cy + 6, 'g', 'lbl sm') + text(x + w - 16, cy + 6, 'm', 'lbl sm') + text(x + 5, py + 6, '1') + text(x + w - 12.500, py + 6, '2'));
  add(path(`M${x + 7} ${b}h${15 + 5 * s}l8-9M${x + w - 28} ${b}h20M${x + 13} ${b}v9h${w - 27}v-9`, 'in'));
  add(rect(x + w / 2 - 6, b + 7, 12, 3.5, 'in', 'fill-opacity="1"'));
  port(x - 3.5, py); port(x + w + 3.5, py); arrow(x - .5, cy, 'r');
};
const volt = (x, y) => {
  add(rect(x, y, 38, 36, 'blk') + path(`M${x + 12} ${y + 9}h12v3h-12zM${x + 24} ${y + 11}h7M${x + 3} ${y + 21}h8v3h-8zM${x + 11} ${y + 23}h5m0-3h5v5h-5zm5 3h5m0-2v4l4-2z`, 'faint'));
  add(text(x + 3.500, y + 17, '+', 'lbl sm') + text(x + 4, y + 32, '-', 'lbl') + text(x + 26, y + 24, 'v', 'lbl'));
  port(x - 4, y + 11); port(x - 4, y + 26);
};

add(rect(163.5, 302.500, 122, 59.500, 'blk') + text(222.500, 338, 'Continuous', 'lbl mid cont') + text(224, 381.500, 'powergui', 'lbl mid'));
add('<path d="M172 354l-4-4M181 344l-4-4M174 347l-5 5q-3 4 0 6t6-1l3-3M178 346l3-4q3-3 6 0t-1 6l-4 4M183 354l3 3M169 341l3 3" fill="none" stroke="#aaa" stroke-width="2"/>');
pulse(336, 308.500, 48); pulse(103.500, 577, 51.500); pulse(103.500, 794.500, 51.500); pulse(913.500, 577, 51.500); pulse(913.500, 781, 48.500);
add(path('M478.500 316v33.500l24.500-17z', 'blk') + '<circle cx="505.500" cy="332.500" r="2.800" fill="#fff" stroke="#000" stroke-width="1.200"/>');
arrow(478, 333, 'r');
for (const x of [429.5, 594.5]) {
  port(x, 400.5); port(x + 45, 400.5);
  add(path(`M${x + 4.500} 401h10l3-5 3 10 3-10 3 10 3-10 3 10 2.500-5h7`, 'in') + `<path d="M${x + 8} 399.500h7M${x + 12} 395.500v8" stroke="#e00" stroke-width="1.300"/>`);
}
port(523.5, 404); port(523.5, 463.5);
add(path('M523.500 408v11M523.500 449v11M517.500 419.500h11l7 6 2 5v8l-2 5-7 6h-11l-7-6-2-5v-8l2-5zM515 436q4-14 8-2t7-1', 'in') + '<path d="M513 413.500h4.500M516.500 411.500v4" stroke="#000" stroke-width="1.500"/>');
sw(441, 487, 68, 36.500, 513); sw(613.500, 490, 60, 30.500, 513); sw(441, 877, 68, 36.500, 903); sw(613.500, 880, 68, 30.500, 903);
volt(688.5, 419.5); volt(583.5, 584.5);
port(493.5, 568.5); port(493.5, 696.5);
add(path('M494.500 573V597l-10.500 6.700 19.500 12.300-19.500 12 19.500 12-19.500 11.700 19.500 12.300-9 5V693', 'in') + '<path d="M490 581.500h7.500M493.700 578v7.500" stroke="#e00" stroke-width="1.300"/>');
add(rect(498, 745.500, 36.500, 37, 'blk') + path('M502 756.500h8l2-1 10 1h6M502 766h7v2h-7zm7 1h5m0-3h5v6h-5zm5 3h9', 'faint') + text(512, 758.500, '+', 'lbl sm') + '<path d="M510.500 773.500v4M520 776.500h2M523 776.500h6" stroke="#000" stroke-width="1.700"/>');
port(516, 741.5); port(508.5, 786.5);
thyristor(190.5, 557.5); thyristor(325.5, 557.5); thyristor(190.5, 775.300); thyristor(325.5, 775.300, false, true);
thyristor(640.5, 557.5, true); thyristor(798.500, 557.5, true); thyristor(640.5, 760, true); thyristor(798.500, 760, true);
[['T1', 164, 608], ['T2', 299, 608], ['T3', 164, 825], ['T4', 302, 825], ['T5', 715.5, 608.5], ['T6', 873, 608.5], ['T7', 715.5, 810.5], ['T8', 873, 810.5]].forEach(([t, x, y]) => add(text(x, y, t)));
add(rect(966, 655, 68, 75, 'blk') + '<rect x="975.500" y="665.500" width="50" height="33" rx="5" fill="none" stroke="#000" stroke-width="1.800"/>');
arrow(965.5, 670.5, 'r'); arrow(965.5, 692.800, 'r'); arrow(965.5, 715.200, 'r');
add(text(310.500, 998.500, 'Bridge Type Cycloconverter', 'heading', 'textLength="414" lengthAdjust="spacingAndGlyphs"'));
document.getElementById('canvas').innerHTML = out;

// ---------- scope traces ----------
// Solver steps inside each of the six half cycles, as fractions of a half cycle.
const steps = [
  [0,.08,.16,.26,.356,.44,.501,.56,.63,.72,.82,.91], [0,.08,.16,.24,.32,.4,.47,.545,.74,.87], [0,.08,.17,.25,.343,.442,.52,.627,.72,.82,.9],
  [0,.1,.2,.3,.432,.544,.66,.78,.9], [0,.1,.2,.3,.4,.53,.74,.87], [0,.1,.21,.33,.446,.62,.8,.9]
];
const X0 = 1140.5, Y0 = 791.5, HALF = 50.5, K = 2.408;
const yel = [], blu = [], ora = [];
for (let h = -2; h <= 14; h++) {
  const n = ((h + 1) % 6 + 6) % 6;
  for (const p of steps[n]) {
    const x = X0 + (h + p) * HALF, s = Math.sin(Math.PI * p), sign = n < 3 ? 1 : -1;
    // the full-amplitude trace has coarser tips than the half-amplitude one
    if (p !== .44 && p !== .52) yel.push(`${x.toFixed(1)} ${(Y0 - K * 100 * s * (h % 2 ? -1 : 1)).toFixed(1)}`);
    blu.push(`${x.toFixed(1)} ${(Y0 - K * 49.3 * s * sign).toFixed(1)}`);
  }
  for (let p = 0; p < 1; p += .1)
    ora.push(`${(X0 + (h + p) * HALF).toFixed(1)} ${(Y0 - K * 4.93 * Math.sin(Math.PI * p) * (n < 3 ? 1 : -1)).toFixed(1)}`);
}
let g = '<clipPath id="area"><rect x="1086" y="493" width="762" height="599"/></clipPath><rect x="1085.500" y="492.500" width="762" height="599"/>';
const xs = [['9.1', 1140.5], ['9.12', 1241.5], ['9.14', 1342.5], ['9.16', 1443.5], ['9.18', 1544.5], ['9.2', 1645.5], ['9.22', 1746.5]];
const ys = [['100', 550.5], ['50', 671.5], ['0', 791.5], ['-50', 911.5], ['-100', 1032.5]];
for (const [t, x] of xs) g += `<path d="M${x} 493v598" stroke="#4d4d4d"/><path d="M${x} 493v6M${x} 1085v6" stroke="#b0b0b0"/><text class="axis" x="${x}" y="1112" text-anchor="middle">${t}</text>`;
for (const [t, y] of ys) g += `<path d="M1086 ${y}h761" stroke="#4d4d4d"/><path d="M1086 ${y}h7M1840 ${y}h7" stroke="#b0b0b0"/><text class="axis" x="1082" y="${y + 6.5}" text-anchor="end">${t}</text>`;
g += '<g clip-path="url(#area)" fill="none" stroke-width="1.800" stroke-linejoin="round">' +
  [['#ffff11', yel], ['#139fff', blu], ['#ff6929', ora]].map(([c, p]) => `<path stroke="${c}" d="M${p.join('L')}"/>`).join('') + '</g>';
g += '<rect x="1085.500" y="492.500" width="762" height="599" fill="none" stroke="#b0b0b0"/>';
g += '<rect x="1846.500" y="482.500" width="18" height="13" fill="#282828" stroke="#eee"/><path d="M1847 485h17" stroke="#bbb"/><path d="M1855.500 486.500v9M1851.500 491l4-4 4 4" fill="none" stroke="#fff" stroke-width="1.800"/>';
document.getElementById('plot').innerHTML = g;
```
